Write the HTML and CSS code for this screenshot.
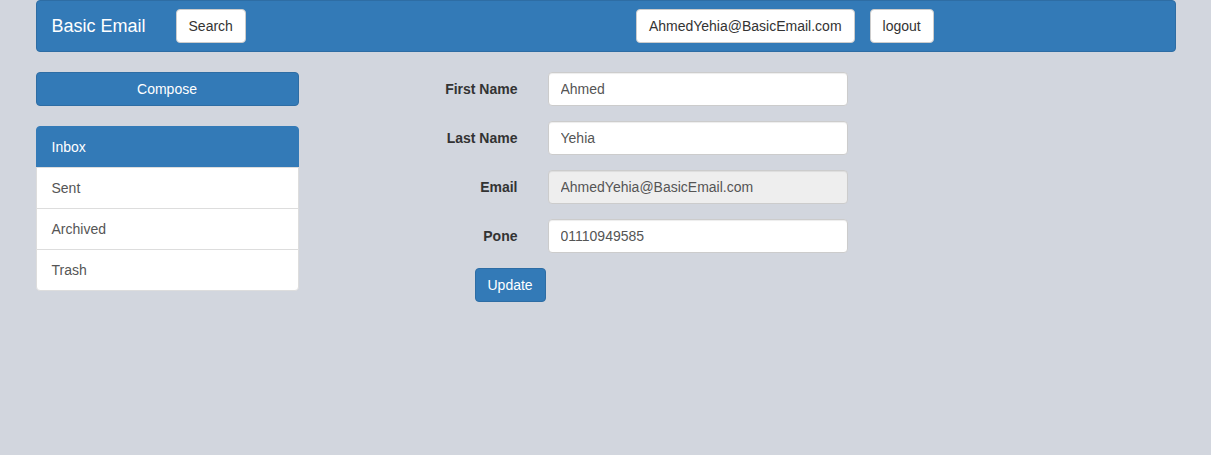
FILE: index.html
```html
<!DOCTYPE html>
<html>
<head>
<meta charset="utf-8">
<title>Basic Email</title>
<link rel="stylesheet" href="styles.css">
</head>
<body>
<div class="container">
  <nav class="navbar">
    <a class="brand" href="#">Basic Email</a>
    <div class="nav-form">
      <button class="btn btn-default">Search</button>
    </div>
    <div class="nav-right">
      <button class="btn btn-default">AhmedYehia@BasicEmail.com</button>
      <button class="btn btn-default">logout</button>
    </div>
  </nav>
  <div class="row">
    <aside class="sidebar">
      <button class="btn btn-primary btn-block">Compose</button>
      <ul class="list-group">
        <li class="list-item active">Inbox</li>
        <li class="list-item">Sent</li>
        <li class="list-item">Archived</li>
        <li class="list-item">Trash</li>
      </ul>
    </aside>
    <main class="main">
      <form class="form">
        <div class="form-group">
          <label class="form-label">First Name</label>
          <input class="form-control" type="text" value="Ahmed">
        </div>
        <div class="form-group">
          <label class="form-label">Last Name</label>
          <input class="form-control" type="text" value="Yehia">
        </div>
        <div class="form-group">
          <label class="form-label">Email</label>
          <input class="form-control" type="text" value="AhmedYehia@BasicEmail.com" disabled>
        </div>
        <div class="form-group">
          <label class="form-label">Pone</label>
          <input class="form-control" type="text" value="01110949585">
        </div>
        <div class="form-actions">
          <button type="button" class="btn btn-primary">Update</button>
        </div>
      </form>
    </main>
  </div>
</div>
</body>
</html>
```
FILE: styles.css
```css
* { box-sizing: border-box; }
html, body { margin: 0; padding: 0; }
body {
  background: #d2d6de;
  font-family: "Liberation Sans", Arial, sans-serif;
  font-size: 14px;
  line-height: 1.42857143;
  color: #333;
}
.container {
  width: 1170px;
  margin: 0 auto;
  padding: 0 15px;
}
.navbar {
  display: flex;
  align-items: center;
  height: 52px;
  background: #337ab7;
  border: 1px solid #2e6da4;
  border-radius: 4px;
  margin-bottom: 20px;
}
.brand {
  display: block;
  padding: 15px;
  font-size: 18px;
  line-height: 20px;
  color: #fff;
  text-decoration: none;
}
.nav-form { padding: 0 15px; display: flex; }
.nav-right {
  display: flex;
  gap: 15px;
  margin-left: 375px;
}
.btn {
  display: inline-block;
  height: 34px;
  padding: 6px 12px;
  font-family: inherit;
  font-size: 14px;
  line-height: 20px;
  border: 1px solid transparent;
  border-radius: 4px;
  cursor: pointer;
  white-space: nowrap;
}
.btn-default {
  background: #fff;
  color: #333;
  border-color: #ccc;
}
.btn-primary {
  background: #337ab7;
  color: #fff;
  border-color: #2e6da4;
}
.btn-block { display: block; width: 100%; }
.row {
  display: flex;
  gap: 30px;
}
.sidebar {
  width: 263px;
  flex: none;
}
.list-group {
  list-style: none;
  margin: 20px 0 0;
  padding: 0;
}
.list-item {
  padding: 10px 15px;
  background: #fff;
  color: #555;
  border: 1px solid #ddd;
  margin-bottom: -1px;
}
.list-item:first-child { border-radius: 4px 4px 0 0; }
.list-item:last-child { border-radius: 0 0 4px 4px; margin-bottom: 0; }
.list-item.active {
  background: #337ab7;
  border-color: #337ab7;
  color: #fff;
}
.main { flex: 1; }
.form-group {
  display: flex;
  align-items: center;
  gap: 30px;
  margin-bottom: 15px;
}
.form-label {
  width: 189px;
  text-align: right;
  font-weight: bold;
  color: #333;
}
.form-control {
  width: 300px;
  height: 34px;
  padding: 6px 12px;
  font-family: inherit;
  font-size: 14px;
  line-height: 20px;
  color: #555;
  background: #fff;
  border: 1px solid #ccc;
  border-radius: 4px;
  box-shadow: inset 0 1px 1px rgba(0,0,0,.075);
}
.form-control:disabled {
  background: #eee;
  color: #555;
  opacity: 1;
}
.form-actions { padding-left: 146px; }
```
